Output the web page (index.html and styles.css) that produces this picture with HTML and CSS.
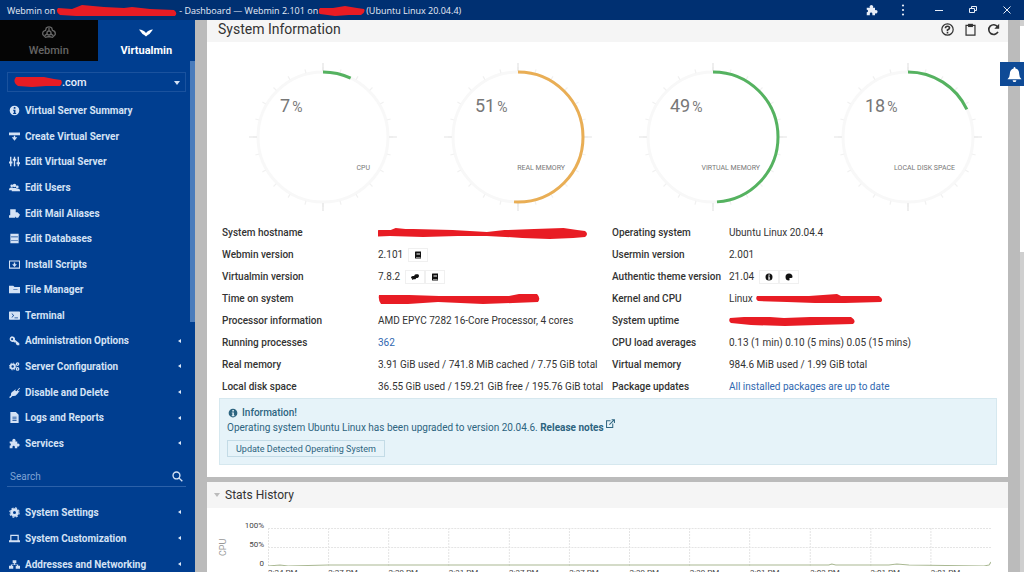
FILE: index.html
```html
<!DOCTYPE html>
<html lang="en">
<head>
<meta charset="utf-8">
<title>Dashboard — Webmin 2.101</title>
<link rel="stylesheet" href="styles.css">
</head>
<body>
<svg class="sprite" aria-hidden="true">
  <symbol id="i-info" viewBox="0 0 16 16"><path fill-rule="evenodd" d="M8 1a7 7 0 1 0 0 14A7 7 0 0 0 8 1zM7 3h2.400v2.400H6.800zM6 7h3.400v4.500h1V13H6v-1.500h1v-3H6z"/></symbol>
  <symbol id="i-create" viewBox="0 0 16 16"><path d="M0 2h16v4H0zM7 7h2v2h3l-4 5-4-5h3z"/></symbol>
  <symbol id="i-sliders" viewBox="0 0 16 16"><path d="M1.500 1h2v14h-2zM7 1h2v14H7zM12.500 1h2v14h-2zM0 8h5v3H0zM5.500 4h5v3h-5zM11 9h5v3h-5z"/></symbol>
  <symbol id="i-users" viewBox="0 0 20 16"><circle cx="5" cy="5" r="2.500"/><circle cx="10" cy="4.500" r="3.200"/><circle cx="15" cy="7" r="2.500"/><path d="M0 12q0-4 4-4h2l2 1h4l3 1q5 0 5 4v1H5v-2H0z"/></symbol>
  <symbol id="i-mail" viewBox="0 0 18 16"><path d="M2 1h9v5h3l4 4-3 5h-3l-2-2v2H0v-4h2z"/></symbol>
  <symbol id="i-db" viewBox="0 0 16 16"><path fill-rule="evenodd" d="M2 1h12v14H2zM3 5v1h10V5zM3 10v1h10v-1z"/></symbol>
  <symbol id="i-install" viewBox="0 0 16 16"><path fill-rule="evenodd" d="M0 2h16v12H0zM1.500 3.500v9h13v-9zM7 5h2v2.500h2.500L8 11.500 4.500 7.500H7z"/></symbol>
  <symbol id="i-folder" viewBox="0 0 18 16"><path fill-rule="evenodd" d="M0 2h7l2 2h9v10H0zM7 7v1h7V7z"/></symbol>
  <symbol id="i-term" viewBox="0 0 16 16"><path fill-rule="evenodd" d="M1 2h14q1 0 1 1v10q0 1-1 1H1q-1 0-1-1V3q0-1 1-1zM3.500 5l2.500 3-2.500 3h1.200l2.600-3-2.600-3zM8 11v1h5v-1z"/></symbol>
  <symbol id="i-key" viewBox="0 0 16 16"><path fill-rule="evenodd" d="M5 2a4 4 0 1 0 1.500 7.700L8 11h2v2l2 2h3v-3L8.700 7A4 4 0 0 0 5 2zM4.500 4.500a1.500 1.500 0 1 1 0 3 1.500 1.500 0 0 1 0-3z"/></symbol>
  <symbol id="i-cogs" viewBox="0 0 18 16"><g fill="none" stroke="currentColor"><circle cx="6" cy="8" r="3.500" stroke-width="3"/><circle cx="6" cy="8" r="5.500" stroke-width="1.500" stroke-dasharray="2.200 2.100"/><circle cx="14" cy="4" r="2" stroke-width="2"/><circle cx="14" cy="12" r="2" stroke-width="2"/></g></symbol>
  <symbol id="i-plug" viewBox="0 0 16 16"><path d="M15 1l1 1-3 3 1 1 2-1-4 5q-3 4-7 3l-3 3-2-1 3-3q-1-4 3-6l4-3-1 2 2 1z"/></symbol>
  <symbol id="i-file" viewBox="0 0 16 16"><path fill-rule="evenodd" d="M2 0h8l4 4v12H2zM5 7v1h6V7zM5 9.500v1h6v-1zM5 12v1h6v-1z"/></symbol>
  <symbol id="i-puzzle" viewBox="0 0 16 16"><path d="M1 5h4.200a2.400 2.400 0 1 1 4 0H12v3.200a2.300 2.300 0 1 1 0 4V15H8.500v-2a1.700 1.700 0 0 0-3.400 0v2H1v-4a1.700 1.700 0 0 0 0-3.400z"/></symbol>
  <symbol id="i-gear" viewBox="0 0 16 16"><g fill="none" stroke="currentColor"><circle cx="8" cy="8" r="4.200" stroke-width="4"/><circle cx="8" cy="8" r="6.800" stroke-width="1.600" stroke-dasharray="3 2.340"/></g></symbol>
  <symbol id="i-laptop" viewBox="0 0 18 16"><path fill-rule="evenodd" d="M2 2h14v9h2v3H0v-3h2zM4 4v7h10V4z"/></symbol>
  <symbol id="i-net" viewBox="0 0 18 16"><path d="M6 1h6v5H9.700v2H15v2h3v5h-7v-5h2V9H5v1h2v5H0v-5h3V8h5.300V6H6z"/></symbol>
  <symbol id="i-search" viewBox="0 0 16 16"><g fill="none" stroke="currentColor" stroke-width="2"><circle cx="6.500" cy="6.500" r="5"/><path d="M10 10l5 5"/></g></symbol>
  <symbol id="i-book" viewBox="0 0 16 16"><path fill-rule="evenodd" d="M3 1h11v14H3q-1 0-1-1V2q0-1 1-1zM5 4v1h7V4zM5 6.500v1h7v-1zM4 12v1h9v-1z"/></symbol>
  <symbol id="i-chat" viewBox="0 0 18 16"><path d="M11 2h5q2 1 2 4t-3 4h-3l-2 3H6l-4 2 1-3q-3-1-3-3 1-3 5-3h2q1-4 4-4z"/></symbol>
  <symbol id="i-palette" viewBox="0 0 16 16"><path d="M8 1a7 7 0 0 1 7 7q0 2-3 2H9.500q-1.500 1-.500 2.500t-1 2.500A7 7 0 0 1 8 1z"/></symbol>
  <symbol id="i-ext" viewBox="0 0 16 16"><path fill="none" stroke="currentColor" stroke-width="1.800" d="M8 3H1v12h11V8M6 10l8-8M10 1.500h5V7"/></symbol>
  <symbol id="dial" viewBox="0 0 160 160">
    <g fill="none" stroke="#f1f1f1">
      <circle cx="80" cy="80" r="65" stroke-width="3" stroke="#f8f8f8"/>
      <circle cx="80" cy="80" r="68" stroke-width="4" pathLength="360" stroke-dasharray="1 14" stroke-dashoffset=".5"/>
      <circle cx="80" cy="80" r="70" stroke-width="8" stroke="#e4e4e4" pathLength="360" stroke-dasharray="1 89" stroke-dashoffset=".5"/>
    </g>
  </symbol>
</svg>

<div class="app">
  <header class="titlebar">
    <div class="window-title">
      <span>Webmin on</span>
      <svg class="scribble scribble-host" viewBox="0 0 122 12"><path d="M2 4l14 1 10-4 22 2 20 1 8-1 18 2 24 1q4 3 1 6l-28 1-30 0-26 0-15-1-16-1q-5-3-2-7z"/></svg>
      <span>- Dashboard — Webmin 2.101 on</span>
      <svg class="scribble scribble-short" viewBox="0 0 46 12"><path d="M1 4l13 0 12-2 12 2 7 1q2 3-3 6l-12 0-14 1-15-2q-3-3 0-6z"/></svg>
      <span>(Ubuntu Linux 20.04.4)</span>
    </div>
    <div class="browser-tools">
      <button aria-label="Extensions"><svg><use href="#i-puzzle"/></svg></button>
      <button aria-label="Menu"><svg viewBox="0 0 12 12"><circle cx="6" cy="1.500" r="1.100"/><circle cx="6" cy="6" r="1.100"/><circle cx="6" cy="10.500" r="1.100"/></svg></button>
    </div>
    <div class="window-tools">
      <button aria-label="Minimize"><svg viewBox="0 0 12 12"><path d="M2 6h8v1H2z"/></svg></button>
      <button aria-label="Restore"><svg viewBox="0 0 12 12"><path fill="none" stroke="currentColor" d="M2.500 4.500h5v4h-5zM4.500 4V2.500h5v4H8"/></svg></button>
      <button aria-label="Close"><svg viewBox="0 0 12 12"><path fill="none" stroke="currentColor" d="M2.500 2.500l7 7M9.500 2.500l-7 7"/></svg></button>
    </div>
  </header>

  <div class="workspace">
    <aside class="sidebar">
      <nav class="tabs">
        <a class="tab" href="#webmin"><svg viewBox="0 0 16 16"><g fill="none" stroke="currentColor" stroke-width="1.500"><path d="M5 2q3-2 6 0l1 3q4 1 3 5l-3 3-4-1-4 1-3-3q-1-4 3-5z"/><circle cx="8" cy="8" r="2.300"/><path d="M8 2v4M3 11l3-2M13 11l-3-2"/></g></svg>Webmin</a>
        <a class="tab tab-active" href="#virtualmin"><svg viewBox="0 0 16 16"><path d="M0 4q5 0 8 4 3-4 8-4l-4 5q-2 1-4 3-2-2-4-3z"/></svg>Virtualmin</a>
      </nav>
      <div class="domain">
        <select aria-label="Domain"><option>.com</option></select>
        <svg class="scribble scribble-domain" viewBox="0 0 50 14"><path d="M3 2l14 0 14 0 10 2 7 1q2 3-1 6l-14 0-14 1-14-1q-6-4-2-9z"/></svg>
        <svg class="domain-caret" viewBox="0 0 6 4"><path d="M0 0h6L3 4z"/></svg>
      </div>
      <ul class="menu menu-main">
        <li><a href="#s"><svg><use href="#i-info"/></svg>Virtual Server Summary</a></li>
        <li><a href="#s"><svg><use href="#i-create"/></svg>Create Virtual Server</a></li>
        <li><a href="#s"><svg><use href="#i-sliders"/></svg>Edit Virtual Server</a></li>
        <li><a href="#s"><svg><use href="#i-users"/></svg>Edit Users</a></li>
        <li><a href="#s"><svg><use href="#i-mail"/></svg>Edit Mail Aliases</a></li>
        <li><a href="#s"><svg><use href="#i-db"/></svg>Edit Databases</a></li>
        <li><a href="#s"><svg><use href="#i-install"/></svg>Install Scripts</a></li>
        <li><a href="#s"><svg><use href="#i-folder"/></svg>File Manager</a></li>
        <li><a href="#s"><svg><use href="#i-term"/></svg>Terminal</a></li>
        <li class="sub"><a href="#s"><svg><use href="#i-key"/></svg>Administration Options</a></li>
        <li class="sub"><a href="#s"><svg><use href="#i-cogs"/></svg>Server Configuration</a></li>
        <li class="sub"><a href="#s"><svg><use href="#i-plug"/></svg>Disable and Delete</a></li>
        <li class="sub"><a href="#s"><svg><use href="#i-file"/></svg>Logs and Reports</a></li>
        <li class="sub"><a href="#s"><svg><use href="#i-puzzle"/></svg>Services</a></li>
      </ul>
      <div class="search">
        <input type="text" placeholder="Search" aria-label="Search">
        <svg><use href="#i-search"/></svg>
      </div>
      <ul class="menu">
        <li class="sub"><a href="#s"><svg><use href="#i-gear"/></svg>System Settings</a></li>
        <li class="sub"><a href="#s"><svg><use href="#i-laptop"/></svg>System Customization</a></li>
        <li class="sub"><a href="#s"><svg><use href="#i-net"/></svg>Addresses and Networking</a></li>
      </ul>
      <div class="side-thumb"></div>
    </aside>

    <main class="content">
      <section class="panel panel-info">
        <div class="panel-head panel-head-top">
          <h2>System Information</h2>
          <div class="panel-tools">
            <button aria-label="Help"><svg viewBox="0 0 16 16"><g fill="none" stroke="currentColor"><circle cx="8" cy="8" r="7" stroke-width="1.500"/><path stroke-width="2" d="M5.500 6.500q0-2.500 2.500-2.500t2.500 2.200Q10.500 7.500 8 8.500V10M8 11v2"/></g></svg></button>
            <button aria-label="Copy"><svg viewBox="0 0 16 16"><path fill="none" stroke="currentColor" stroke-width="1.500" d="M2.500 3h11v12h-11z"/><path d="M5 1h6v4H5z"/></svg></button>
            <button aria-label="Refresh"><svg viewBox="0 0 16 16"><path fill="none" stroke="currentColor" stroke-width="2" d="M13 4.500A6 6 0 1 0 13.500 11"/><path d="M15 1v6H9z"/></svg></button>
          </div>
        </div>
        <div class="gauges">
          <svg viewBox="0 0 160 160"><use href="#dial"/><circle class="arc" cx="80" cy="80" r="65" pathLength="100" stroke-dasharray="7 93"/><text class="pct" x="37" y="55">7<tspan class="sign" dx="2">%</tspan></text><text class="cap" x="127" y="113">CPU</text></svg>
          <svg viewBox="0 0 160 160"><use href="#dial"/><circle class="arc arc-warn" cx="80" cy="80" r="65" pathLength="100" stroke-dasharray="51 49"/><text class="pct" x="37" y="55">51<tspan class="sign" dx="2">%</tspan></text><text class="cap" x="127" y="113">REAL MEMORY</text></svg>
          <svg viewBox="0 0 160 160"><use href="#dial"/><circle class="arc" cx="80" cy="80" r="65" pathLength="100" stroke-dasharray="49 51"/><text class="pct" x="37" y="55">49<tspan class="sign" dx="2">%</tspan></text><text class="cap" x="127" y="113">VIRTUAL MEMORY</text></svg>
          <svg viewBox="0 0 160 160"><use href="#dial"/><circle class="arc" cx="80" cy="80" r="65" pathLength="100" stroke-dasharray="18 82"/><text class="pct" x="37" y="55">18<tspan class="sign" dx="2">%</tspan></text><text class="cap" x="127" y="113">LOCAL DISK SPACE</text></svg>
        </div>
        <table class="facts">
          <colgroup><col class="c-label"><col class="c-value"><col class="c-label2"><col></colgroup>
          <tr><th scope="row">System hostname</th><td><svg class="scribble s-210" viewBox="0 0 214 12"><path d="M1 3l12 0 5-2 10 1 8 0 40 1 35 2 18-2 30-1 30-1 14 2 8 1q4 3 0 6l-12 1-24 1-28-1-36-2-30 0-35 1-34-1-22 1q-12 0-9-5z"/></svg></td><th scope="row">Operating system</th><td>Ubuntu Linux 20.04.4</td></tr>
          <tr><th scope="row">Webmin version</th><td><span class="ver">2.101 <button aria-label="Changelog"><svg><use href="#i-book"/></svg></button></span></td><th scope="row">Usermin version</th><td>2.001</td></tr>
          <tr><th scope="row">Virtualmin version</th><td><span class="ver">7.8.2 <span class="btns"><button aria-label="Support"><svg><use href="#i-chat"/></svg></button><button aria-label="Changelog"><svg><use href="#i-book"/></svg></button></span></span></td><th scope="row">Authentic theme version</th><td><span class="ver">21.04 <span class="btns"><button aria-label="About theme"><svg><use href="#i-info"/></svg></button><button aria-label="Theme colors"><svg><use href="#i-palette"/></svg></button></span></span></td></tr>
          <tr><th scope="row">Time on system</th><td><svg class="scribble s-162" viewBox="0 0 162 12"><path d="M1 2l30 0 30 1 40 0 30 0 10-2 18 0q4 4 1 8l-25 1-30 1-45-2-30 2-27 0q-3-4-2-9z"/></svg></td><th scope="row">Kernel and CPU</th><td><span class="linux">Linux <svg class="scribble s-127" viewBox="0 0 127 12"><path d="M1 3l28 0 24 0 28-2 4 2 38 0q5 3 2 6l-36 1-30 0-28-1-29-1q-3-2-1-5z"/></svg></span></td></tr>
          <tr><th scope="row">Processor information</th><td>AMD EPYC 7282 16-Core Processor, 4 cores</td><th scope="row">System uptime</th><td><svg class="scribble s-127" viewBox="0 0 127 12"><path d="M1 3l14-1 26 0 14 1 26-1 30 0 11 0q6 4 2 7l-36 1-32 1-34-1-20-2q-3-2-1-5z"/></svg></td></tr>
          <tr><th scope="row">Running processes</th><td><a href="#p">362</a></td><th scope="row">CPU load averages</th><td>0.13 (1 min) 0.10 (5 mins) 0.05 (15 mins)</td></tr>
          <tr><th scope="row">Real memory</th><td>3.91 GiB used / 741.8 MiB cached / 7.75 GiB total</td><th scope="row">Virtual memory</th><td>984.6 MiB used / 1.99 GiB total</td></tr>
          <tr><th scope="row">Local disk space</th><td>36.55 GiB used / 159.21 GiB free / 195.76 GiB total</td><th scope="row">Package updates</th><td><a href="#u">All installed packages are up to date</a></td></tr>
        </table>
        <div class="alert">
          <div class="alert-title"><svg><use href="#i-info"/></svg>Information!</div>
          <div>Operating system Ubuntu Linux has been upgraded to version 20.04.6. <a href="#r">Release notes <svg><use href="#i-ext"/></svg></a></div>
          <button>Update Detected Operating System</button>
        </div>
      </section>

      <section class="panel">
        <div class="panel-head"><svg class="fold" viewBox="0 0 6 4"><path d="M0 0h6L3 4z"/></svg><h2>Stats History</h2></div>
        <div class="chart">
          <div class="axis-name">CPU</div>
          <div class="y-axis"><span>100%</span><span>50%</span><span>0</span></div>
          <div class="plot">
            <svg viewBox="0 0 722 38" preserveAspectRatio="none">
              <path class="grid" d="M0 .5H722M0 19.500H722M.5 0V38M60.500 0V38M120.500 0V38M180.500 0V38M241 0V38M301 0V38M361 0V38M421 0V38M481 0V38M541.500 0V38M602 0V38M662 0V38"/>
              <path class="line" d="M0 38L12 37 20 38 60 37H540L560 37 563 36 567 37 620 37 628 36 640 37 715 38 720 37 722 34"/>
            </svg>
            <div class="x-axis"><span>2:24 PM</span><span>2:27 PM</span><span>2:29 PM</span><span>2:31 PM</span><span>2:37 PM</span><span>2:37 PM</span><span>2:39 PM</span><span>2:39 PM</span><span>3:01 PM</span><span>3:03 PM</span><span>3:01 PM</span><span>3:01 PM</span></div>
          </div>
        </div>
      </section>
    </main>
    <div class="page-scroll"><div class="page-thumb"></div></div>
    <button class="bell" aria-label="Notifications"><svg viewBox="0 0 16 16"><path d="M8 0q1 0 1 1.500 4 1 4 6Q13 11 15.500 13H.5Q3 11 3 7.500q0-5 4-6Q7 0 8 0zM6 14h4q0 2-2 2t-2-2z"/></svg></button>
  </div>
</div>
</body>
</html>
```

FILE: styles.css
```css
* { box-sizing: border-box; }
body { margin: 0; font-family: Roboto, "Liberation Sans", sans-serif; font-size: 10px; color: #333; }
a { text-decoration: none; color: inherit; }
button { font: inherit; color: inherit; background: none; border: 0; padding: 0; }
svg { fill: currentColor; flex: none; }
ul { list-style: none; margin: 0; padding: 0; }
h2 { margin: 0; font-size: 14px; font-weight: 400; color: #333; }
.sprite { position: absolute; width: 0; height: 0; }
.scribble { color: #e81c24; height: 12px; display: block; }

.app { height: 100vh; display: flex; flex-direction: column; overflow: hidden; }

.titlebar { display: flex; flex: none; height: 20px; background: #003072; color: #e8eef8; font-family: "Open Sans", "Noto Sans", sans-serif; font-size: 9px; }
.window-title { flex: 1; display: flex; align-items: center; padding-left: 7px; gap: 1px; white-space: nowrap; }
.scribble-host { width: 122px; }
.scribble-short { width: 46px; }
.titlebar button { height: 20px; display: flex; align-items: center; justify-content: center; }
.titlebar svg:not(.scribble) { width: 12px; height: 12px; }
.browser-tools, .window-tools { display: flex; }
.browser-tools { margin-right: 4px; }
.browser-tools button { width: 31px; }
.window-tools button { width: 34px; }

.workspace { position: relative; flex: 1; min-height: 0; display: flex; background: #bbb; }

.sidebar { position: relative; width: 195px; flex: none; background: #003e90; color: #d4e2f5; overflow: hidden; font-size: 10px; font-weight: 700; }
.tabs { display: flex; height: 41px; }
.tab { flex: 1; display: flex; flex-direction: column; align-items: center; justify-content: center; gap: 4px; background: #050505; color: #666; font-size: 11px; font-weight: 500; line-height: 14px; padding-top: 2px; }
.tab svg { width: 14px; height: 14px; }
.tab-active { background: none; color: #fff; font-weight: 700; }
.domain { position: relative; margin: 11px 9px 6px 7px; }
.domain select { appearance: none; width: 100%; height: 20px; border: 1px solid #1a529e; background: none; color: #e8f0fc; font: inherit; font-size: 11px; font-weight: 500; padding: 0 0 0 54px; }
.scribble-domain { position: absolute; left: 6px; top: 3px; width: 50px; height: 14px; }
.domain-caret { position: absolute; right: 6px; top: 9px; width: 6px; height: 4px; }
.menu { display: grid; grid-auto-rows: 26px; padding: 0 14px 0 9px; }
.menu-main { grid-auto-rows: 1fr; min-height: 358px; }
.menu li { display: flex; align-items: center; justify-content: space-between; }
.menu a { display: flex; align-items: center; gap: 5px; white-space: nowrap; }
.menu svg { width: 11px; height: 11px; }
.sub::after { content: ""; border: 2px solid transparent; border-right: 3px solid #dce8f8; border-left: 0; }
.search { display: flex; align-items: center; height: 21px; margin: 10px 9px 12px 7px; padding: 0 3px; border-bottom: 1px solid #2c61a9; }
.search input { flex: 1; min-width: 0; border: 0; padding: 0; background: none; color: #fff; font: inherit; font-weight: 400; outline: 0; }
.search input::placeholder { color: #7fa3d4; }
.search svg { width: 11px; height: 11px; }
.side-thumb { position: absolute; right: 0; top: 41px; width: 5px; height: 261px; background: #4a7cbc; }

.content { flex: 1; min-width: 0; padding: 0 12px; overflow: hidden; display: flex; flex-direction: column; gap: 5px; }
.panel { background: #fff; flex: none; }
.panel-info { padding-bottom: 12px; }
.panel-head { display: flex; align-items: center; height: 26px; padding: 0 8px 0 7px; background: #f5f5f5; }
.panel-head h2 { font-size: 12px; line-height: 16px; }
.panel-head-top { height: 22px; padding: 0 8px 4px 11px; }
.panel-head-top h2 { font-size: 14px; }
.panel-tools { display: flex; gap: 10px; margin-left: auto; color: #333; }
.panel-tools svg { width: 13px; height: 13px; display: block; }
.fold { width: 6px; height: 4px; margin-right: 5px; color: #bbb; }

.gauges { display: grid; grid-template-columns: repeat(4, 1fr); justify-items: center; padding: 15px 3px 5px 18px; }
.gauges > svg { width: 160px; height: 160px; }
.arc { fill: none; stroke: #55b260; stroke-width: 3px; transform: rotate(-90deg); transform-origin: 80px 80px; }
.arc-warn { stroke: #e9ae55; }
.pct { font-size: 18px; fill: #777; }
.sign { font-size: 14px; }
.cap { font-size: 7px; fill: #777; text-anchor: end; }

.facts { table-layout: fixed; width: 100%; border-collapse: collapse; }
.facts th, .facts td { height: 22px; padding: 0; text-align: left; line-height: 14px; white-space: nowrap; }
.facts th { font-weight: 500; }
.facts th:first-child { padding-left: 15px; }
.c-label { width: 171px; }
.c-value { width: 234px; }
.c-label2 { width: 117px; }
.facts a { color: #3068b0; }
.s-210 { width: 210px; }
.s-162 { width: 162px; }
.s-127 { width: 127px; }
.ver { display: flex; align-items: center; gap: 5px; }
.ver button { border: 1px solid #f0f0f0; height: 14px; width: 20px; display: inline-flex; align-items: center; justify-content: center; color: #111; }
.ver svg { width: 8px; height: 8px; }
.btns { display: flex; }
.linux { display: flex; align-items: center; gap: 3px; }

.alert { margin: 0 11px 0 12px; padding: 7px; background: #e6f3f9; border: 1px solid #d6e8ef; color: #2d6480; line-height: 14px; }
.alert-title { display: flex; align-items: center; gap: 4px; padding-left: 1px; font-weight: 500; line-height: 13px; }
.alert-title svg { width: 10px; height: 10px; }
.alert a { font-weight: 700; }
.alert a svg { width: 9px; height: 9px; vertical-align: 3px; }
.alert button { border: 1px solid #c3dbe6; padding: 0 8px; height: 17px; margin-top: 5px; display: block; font-size: 9px; }

.chart { display: flex; padding: 20px 17px 0 11px; color: #444; font-size: 8px; }
.axis-name { writing-mode: vertical-rl; transform: rotate(180deg); height: 38px; text-align: center; font-size: 9px; color: #999; }
.y-axis { flex: none; width: 36px; height: 46px; display: flex; flex-direction: column; justify-content: space-between; text-align: right; line-height: 8px; margin: -6px 4px 0 0; }
.plot { flex: 1; min-width: 0; }
.plot svg { display: block; width: 100%; height: 38px; }
.grid { fill: none; stroke: #e4e4e4; stroke-dasharray: 2 1; }
.line { fill: none; stroke: #a9b892; }
.x-axis { display: grid; grid-template-columns: repeat(12, 1fr); line-height: 10px; padding-top: 2px; }

.page-scroll { width: 4px; flex: none; background: #cfcfcf; }
.page-thumb { height: 41%; margin-top: 6px; background: #fff; }
.bell { position: absolute; right: 0; top: 42px; width: 24px; height: 24px; background: #0e4a96; color: #fff; display: flex; align-items: center; justify-content: center; padding-left: 4px; }
.bell svg { width: 15px; height: 15px; }
```
